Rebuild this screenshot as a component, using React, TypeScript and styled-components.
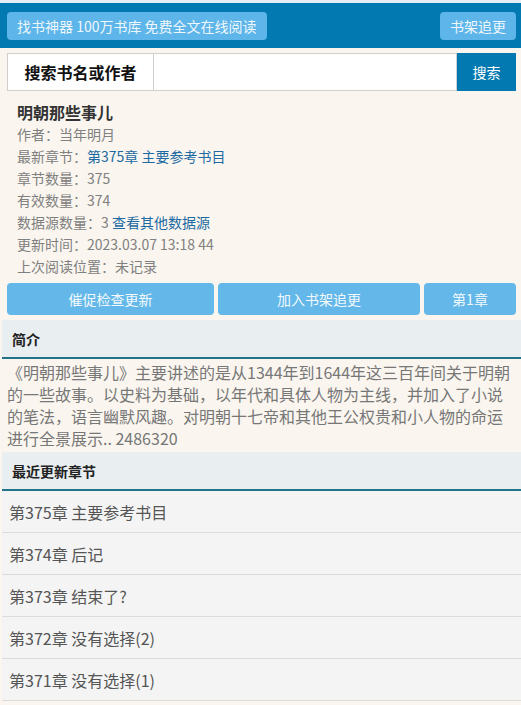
import React from "react"
import styled, { createGlobalStyle } from "styled-components"

const GlobalStyle = createGlobalStyle`
  html, body {
    margin:0;
    padding:0;
    background:#faf6ef;
    font-family:"Noto Sans CJK SC", "Noto Sans", sans-serif;
  }
  * { box-sizing:border-box; }
`

const chapters = [
  "第375章 主要参考书目",
  "第374章 后记",
  "第373章 结束了?",
  "第372章 没有选择(2)",
  "第371章 没有选择(1)",
]

export default function App() {
  return <Page>
    <GlobalStyle/>
    <Header>
      <HeaderButton>找书神器 100万书库 免费全文在线阅读</HeaderButton>
      <HeaderButton>书架追更</HeaderButton>
    </Header>
    <SearchRow>
      <SearchLabel>搜索书名或作者</SearchLabel>
      <SearchInput type="text"/>
      <SearchButton>搜索</SearchButton>
    </SearchRow>
    <Info>
      <BookTitle>明朝那些事儿</BookTitle>
      <InfoLine>作者：当年明月</InfoLine>
      <InfoLine>最新章节：<Link>第375章 主要参考书目</Link></InfoLine>
      <InfoLine>章节数量：375</InfoLine>
      <InfoLine>有效数量：374</InfoLine>
      <InfoLine>数据源数量：3 <Link>查看其他数据源</Link></InfoLine>
      <InfoLine>更新时间：2023.03.07 13:18 44</InfoLine>
      <InfoLine>上次阅读位置：未记录</InfoLine>
    </Info>
    <ActionRow>
      <ActionButton>催促检查更新</ActionButton>
      <ActionButton>加入书架追更</ActionButton>
      <ActionButton>第1章</ActionButton>
    </ActionRow>
    <Section>
      <SectionTitle>简介</SectionTitle>
      <Intro>
        《明朝那些事儿》主要讲述的是从1344年到1644年这三百年间关于明朝的一些故事。以史料为基础，以年代和具体人物为主线，并加入了小说的笔法，语言幽默风趣。对明朝十七帝和其他王公权贵和小人物的命运进行全景展示.. 2486320
      </Intro>
    </Section>
    <Section>
      <SectionTitle>最近更新章节</SectionTitle>
      <ChapterList>
        {chapters.map(c => <ChapterItem key={c}>{c}</ChapterItem>)}
      </ChapterList>
    </Section>
  </Page>
}

const Page = styled.div`
  width:100%;
  min-height:705px;
  border-top:3px solid #e6edf2;
`
const Header = styled.div`
  display:flex;
  align-items:center;
  justify-content:space-between;
  height:45px;
  padding:0 5px 0 7px;
  background:#0279b0;
`
const HeaderButton = styled.div`
  height:28px;
  line-height:28px;
  padding:0 10px;
  border-radius:4px;
  background:#5db5e9;
  color:#eef7fc;
  font-size:14px;
  white-space:nowrap;
`
const SearchRow = styled.div`
  display:flex;
  height:38px;
  margin:5px 5px 0 7px;
`
const SearchLabel = styled.div`
  width:147px;
  display:flex;
  align-items:center;
  justify-content:center;
  background:#fff;
  border:1px solid #cfcfcf;
  font-size:16px;
  font-weight:bold;
  color:#111;
`
const SearchInput = styled.input`
  flex:1;
  min-width:0;
  height:100%;
  border:1px solid #cfcfcf;
  border-left:none;
  background:#fff;
  outline:none;
`
const SearchButton = styled.div`
  width:59px;
  display:flex;
  align-items:center;
  justify-content:center;
  background:#0279b0;
  color:#fff;
  font-size:14px;
`
const Info = styled.div`
  padding:10px 0 0 17px;
`
const BookTitle = styled.div`
  font-size:16px;
  font-weight:bold;
  line-height:22px;
  color:#333;
`
const InfoLine = styled.div`
  font-size:14px;
  line-height:22px;
  color:#808080;
`
const Link = styled.span`
  color:#1d6aa3;
`
const ActionRow = styled.div`
  display:grid;
  grid-template-columns:207px 202px 1fr;
  gap:4px;
  margin:6px 5px 0 7px;
`
const ActionButton = styled.div`
  height:32px;
  display:flex;
  align-items:center;
  justify-content:center;
  border-radius:4px;
  background:#63b8e9;
  color:#f2f9fd;
  font-size:14px;
`
const Section = styled.div`
  margin:5px 0 0 2px;
  & + & { margin-top:3px; }
`
const SectionTitle = styled.div`
  height:39px;
  padding-left:10px;
  display:flex;
  align-items:center;
  background:#e9eef1;
  border-bottom:2px solid #237489;
  font-size:14px;
  font-weight:bold;
  color:#222;
`
const Intro = styled.div`
  padding:2px 5px 0 5px;
  font-size:16px;
  line-height:22px;
  color:#777;
`
const ChapterList = styled.div`
  background:#f4f4f4;
`
const ChapterItem = styled.div`
  height:42px;
  padding-left:7px;
  display:flex;
  align-items:center;
  border-bottom:1px solid #dcdcdc;
  font-size:16px;
  color:#555;
`
